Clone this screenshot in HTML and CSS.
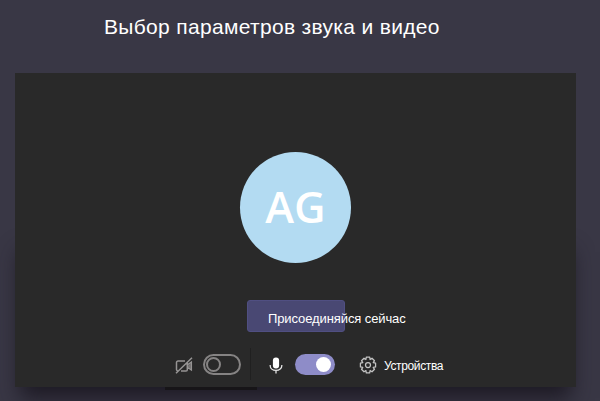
FILE: index.html
```html
<!DOCTYPE html>
<html lang="ru">
<head>
<meta charset="utf-8">
<title>Выбор параметров звука и видео</title>
<link rel="stylesheet" href="styles.css">
</head>
<body>
<main class="page">
  <h1 class="title"><span>Выбор параметров звука и видео</span></h1>
  <section class="preview">
    <div class="avatar"><span>AG</span></div>
    <button class="join"><span>Присоединяйся сейчас</span></button>
    <div class="controls">
      <svg class="camera" width="18" height="17" viewBox="0 0 18 17" fill="none" stroke="#969494" stroke-width="1.5">
        <path d="M10 4H3a1.500 1.500 0 0 0-1.500 1.500v7A1.500 1.500 0 0 0 3 14M6 14h5a1.300 1.300 0 0 0 1.300-1.300V5.500M12.300 8l4-2.800v7.600l-4-2.600M1 16.200 17 .8"/>
        <path d="M13 8.600 16 6v6l-3-2z" fill="#777575" stroke="none"/>
      </svg>
      <div class="toggle toggle-off"><i></i></div>
      <div class="divider"></div>
      <svg class="mic" width="14" height="17" viewBox="0 0 14 17" fill="none" stroke="#e4e4e4" stroke-width="1.300">
        <rect x="3.900" y=".5" width="6.200" height="11" rx="3" fill="#fff" stroke="none"/>
        <path d="M1.200 8v.7C1.200 11.300 3.500 13.400 7 13.400s5.800-2.100 5.800-4.700V8M7 13v3.500"/>
      </svg>
      <div class="toggle toggle-on"><i></i></div>
      <svg class="gear" width="18" height="18" viewBox="0 0 18 18" fill="none" stroke="#c4c4c4" stroke-width="1.250" stroke-linejoin="round">
        <path d="M7.300 1.200h3.400l.4 2.300 1.900-1.300 2.500 2.500-1.300 1.900 2.400.5v3.800l-2.400.5 1.300 1.900-2.500 2.500-1.900-1.300-.4 2.300H7.300l-.4-2.300L5 15.800l-2.500-2.500 1.300-1.900-2.400-.5V7.100l2.400-.5-1.300-1.900L5 2.200l1.900 1.300z"/>
        <circle cx="9" cy="9" r="2.500"/>
      </svg>
      <span class="devices">Устройства</span>
    </div>
    <div class="edge"></div>
  </section>
</main>
</body>
</html>
```
FILE: styles.css
```css
* { box-sizing: border-box; }
body {
  margin: 0;
  background: #393745;
  color: #fff;
  font-family: "Liberation Sans", Arial, sans-serif;
}
.page {
  height: 401px;
  padding: 0 24px 0 15px;
  overflow: hidden;
}
.title {
  margin: 0;
  height: 73px;
  padding: 14px 0 0 89px;
  font-size: 21px;
  line-height: 26px;
  font-weight: 400;
  letter-spacing: 0.32px;
  white-space: nowrap;
}
.preview {
  position: relative;
  display: flex;
  flex-direction: column;
  height: 314px;
  padding-top: 79px;
  background: #292929;
}
.preview::before {
  content: "";
  position: absolute;
  z-index: -1;
  inset: 178px 10px 0;
  box-shadow: 0 6px 20px 5px #1d1a24;
}
.avatar {
  display: flex;
  align-items: center;
  justify-content: center;
  width: 111px;
  height: 111px;
  margin-left: 225px;
  padding-bottom: 2px;
  border-radius: 50%;
  background: #b3dbf2;
  font: 600 43.5px/1 "Open Sans", sans-serif;
}
.join {
  width: 98px;
  height: 32px;
  margin: 37px 0 0 232px;
  padding: 5px 0 0 20px;
  border: 1px solid #504f82;
  border-radius: 3px;
  background: #494873;
  color: #fff;
  font: 13px/16px "Liberation Sans", Arial, sans-serif;
  letter-spacing: -0.1px;
  text-align: left;
  white-space: nowrap;
}
.controls {
  display: flex;
  align-items: center;
  height: 32px;
  margin: 16px 0 0 160px;
}
.camera { margin-top: 2px; }
.toggle {
  display: flex;
  align-items: center;
  height: 21px;
  border-radius: 11px;
}
.toggle i { border-radius: 50%; }
.toggle-off {
  width: 38px;
  margin-left: 10px;
  padding-left: 1px;
  border: 2px solid #858383;
}
.toggle-off i {
  width: 15px;
  height: 15px;
  border: 2px solid #858383;
}
.divider {
  width: 1px;
  height: 32px;
  margin-left: 9px;
  background: #202020;
}
.mic { margin: 2px 0 0 18px; }
.toggle-on {
  justify-content: flex-end;
  width: 40px;
  margin-left: 12px;
  padding-right: 4px;
  background: #8e8cc8;
}
.toggle-on i {
  width: 15px;
  height: 15px;
  background: #fff;
}
.gear { margin: 1px 0 0 24px; }
.devices {
  margin-left: 7px;
  padding-top: 4px;
  font-size: 12px;
  line-height: 14px;
  letter-spacing: -0.37px;
}
.edge {
  position: absolute;
  left: 150px;
  top: 314px;
  width: 92px;
  height: 3px;
  background: #171518;
}
```
